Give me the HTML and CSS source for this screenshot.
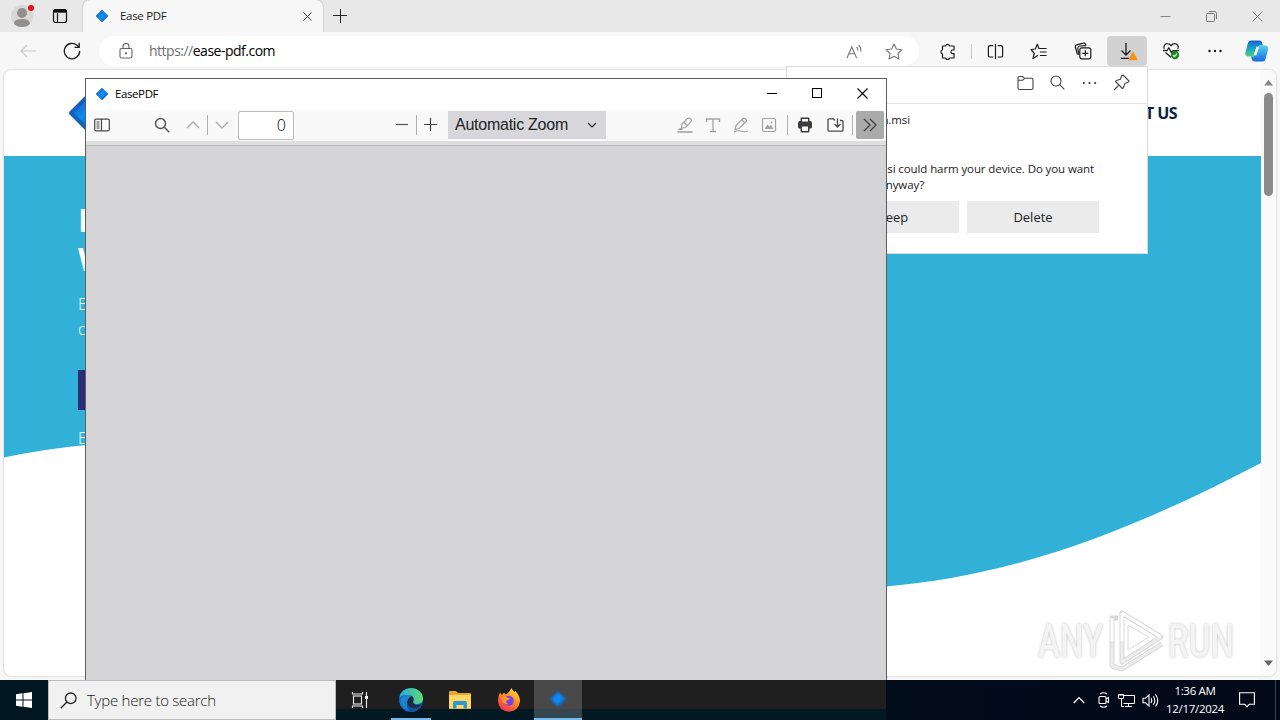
FILE: index.html
```html
<!DOCTYPE html>
<html lang="en">

<head>
    <meta charset="utf-8">
    <title>Ease PDF</title>
    <link rel="stylesheet" href="styles.css">
</head>

<body>
    <!-- shared gem logo -->
    <svg class="defs">
        <defs>
            <linearGradient id="gem" x1="0" y1="0" x2="1" y2="1">
                <stop offset="0" stop-color="#1a55b0"/>
                <stop offset=".5" stop-color="#0a8cf5"/>
                <stop offset="1" stop-color="#0a4faa"/>
            </linearGradient>
            <linearGradient id="cop1" x1="0" y1="0" x2="0" y2="1">
                <stop offset="0" stop-color="#1b5fd0"/>
                <stop offset=".5" stop-color="#16a6c9"/>
                <stop offset="1" stop-color="#55cf72"/>
            </linearGradient>
            <linearGradient id="cop2" x1="0" y1="0" x2="0" y2="1">
                <stop offset="0" stop-color="#54d0ef"/>
                <stop offset="1" stop-color="#1768e0"/>
            </linearGradient>
            <linearGradient id="edge1" x1="0" y1="0" x2="1" y2="0">
                <stop offset="0" stop-color="#2aa5e0"/>
                <stop offset="1" stop-color="#5ddc71"/>
            </linearGradient>
            <linearGradient id="fox" x1=".8" y1="0" x2=".2" y2="1">
                <stop offset="0" stop-color="#ffe43a"/>
                <stop offset=".45" stop-color="#ff8a1e"/>
                <stop offset="1" stop-color="#f02a5c"/>
            </linearGradient>
            <symbol id="logo" viewBox="0 0 14 14">
                <path d="M7 1 13 7 7 13 1 7z" fill="url(#gem)" stroke="#1565c0" stroke-width=".6" stroke-linejoin="round"/>
                <path d="M7 3.4 10.6 7 7 10.6 3.4 7z" fill="#0b8cf5"/>
            </symbol>
        </defs>
    </svg>

    <div class="desktop">
        <!-- browser -->
        <div class="browser">
            <div class="tabstrip">
                <div class="profile">
                    <svg width="26" height="28" viewBox="0 0 26 28">
                        <circle cx="12" cy="16" r="11" fill="#d9d7d5"/>
                        <circle cx="12" cy="13" r="5" fill="#918f8d"/>
                        <path d="M4 24q0-5 8-5t8 5q-3 3-8 3t-8-3z" fill="#918f8d"/>
                        <circle cx="21" cy="8" r="3" fill="#e0101c"/>
                    </svg>
                </div>
                <div class="workspaces">
                    <svg width="16" height="16" viewBox="0 0 16 16" fill="none" stroke="#111" stroke-width="1.2">
                        <rect x="1.5" y="1.5" width="13" height="13" rx="2"/>
                        <path d="M1.5 3.5h13M5.5 5v9.5" />
                        <path d="M2 3.2h12" stroke-width="3"/>
                    </svg>
                </div>
                <div class="tab">
                    <svg width="14" height="14"><use href="#logo"/></svg>
                    <span class="tab-title">Ease PDF</span>
                    <svg class="tab-close" width="9" height="9" viewBox="0 0 9 9" stroke="#333"><path d="M.5.5l8 8M8.500.5l-8 8"/></svg>
                </div>
                <svg class="newtab" width="14" height="14" viewBox="0 0 14 14" stroke="#222"><path d="M7.5 0v14M0 6.5h14"/></svg>
                <div class="win-controls">
                    <svg width="11" height="11" viewBox="0 0 11 11" stroke="#888"><path d="M.5 5.5h10"/></svg>
                    <svg width="11" height="11" viewBox="0 0 11 11" fill="none" stroke="#777"><rect x=".5" y="2.5" width="8" height="8" rx="1"/><path d="M3 .5h5.5a2 2 0 0 1 2 2V8"/></svg>
                    <svg width="11" height="11" viewBox="0 0 11 11" stroke="#777"><path d="M.5.5l10 10M10.5.5l-10 10"/></svg>
                </div>
            </div>

            <div class="toolbar">
                <svg class="back" width="16" height="14" viewBox="0 0 16 14" fill="none" stroke="#c8c8c8" stroke-width="1.1"><path d="M7 1 1 7l6 6M1 7h15"/></svg>
                <svg class="reload" width="18" height="18" viewBox="0 0 18 18" fill="none" stroke="#1b1b1b" stroke-width="1.3"><path d="M16.7 9A7.7 7.7 0 1 1 14 3.2L16 5M16.2.8V5.3h-4.6"/></svg>
                <div class="address">
                    <svg width="14" height="16" viewBox="0 0 14 16" fill="none" stroke="#666" stroke-width="1.1"><rect x="1" y="5.5" width="12" height="9.5" rx="1.5"/><path d="M4 5.5V3.5a3 3 0 0 1 6 0v2"/><circle cx="7" cy="10.3" r=".6" fill="#555"/></svg>
                    <span class="url"><span class="scheme">https://</span>ease-pdf.com</span>
                    <svg class="read" width="17" height="15" viewBox="0 0 17 15" fill="none" stroke="#777" stroke-width="1.1"><path d="M1 14 5.800 3 10.600 14M2.800 9.800h6M10.500 3q1.600 1.300 1.200 3.600M12.500 1.200q3 2.300 2.200 6.400"/></svg>
                    <svg width="18" height="17" viewBox="0 0 18 17" fill="none" stroke="#777" stroke-width="1.1" stroke-linejoin="round"><path d="M9 1l2.400 5 5.600.7-4.100 3.800 1 5.500L9 13.300 4.100 16l1-5.500L1 6.700 6.600 6z"/></svg>
                </div>
                <div class="tool"><svg width="17" height="17" viewBox="0 0 17 17" fill="none" stroke="#1b1b1b" stroke-width="1.2" stroke-linejoin="round"><path d="M3.500 3h3a2.200 2.200 0 0 1 4.200 0H15v4h-1.200a1.800 1.800 0 0 0 0 3.600H15V15h-4.300a2.200 2.200 0 0 1-4.200 0h-3v-4a2.200 2.200 0 0 1 0-4.200z"/></svg></div>
                <div class="tool-sep"></div>
                <div class="tool"><svg width="17" height="17" viewBox="0 0 17 17" fill="none" stroke="#1b1b1b" stroke-width="1.2"><path d="M6.3 2.6H3A1.6 1.6 0 0 0 1.4 4.2v8.2A1.6 1.6 0 0 0 3 14h3.3M10.7 2.6H14a1.6 1.6 0 0 1 1.6 1.6v8.2A1.6 1.6 0 0 1 14 14h-3.3M8.500 1v15"/></svg></div>
                <div class="tool"><svg width="18" height="17" viewBox="0 0 18 17" fill="none" stroke="#1b1b1b" stroke-width="1.2" stroke-linejoin="round"><path d="M10.600 5.500 9 5.500 7.300 1.200 5.300 6 1 6.500l3.300 3.800L3 15.500l5-3.200M10.600 5.500h6M10 9h6.600M10 12.500h6.600"/></svg></div>
                <div class="tool"><svg width="18" height="18" viewBox="0 0 18 18" fill="none" stroke="#1b1b1b" stroke-width="1.2"><rect x="5.800" y="5.800" width="11" height="11" rx="2"/><path d="M11.300 8.300v6M8.300 11.300h6M3.500 12.500 1.300 5A2 2 0 0 1 2.700 2.800l6.500-1.700a2 2 0 0 1 2.500 1.400l.3 1.200"/><path d="M5 13 3.800 7A2.500 2.500 0 0 1 6 4L12 3.700"/></svg></div>
                <div class="tool download"><svg width="22" height="20" viewBox="0 0 22 20" fill="none" stroke="#1b1b1b" stroke-width="1.300"><path d="M10 2v12M5.500 9.500 10 14l4.500-4.500M5 17.400h9"/><path d="M17 11.500 21 18.500h-8z" fill="#f7941d" stroke="#f7941d" stroke-linejoin="round"/></svg></div>
                <div class="tool"><svg width="19" height="18" viewBox="0 0 19 18" fill="none" stroke="#1b1b1b" stroke-width="1.2" stroke-linejoin="round"><path d="M2.300 7.300C.8 4.300 3 1.600 5.500 1.700 7.500 1.700 8.500 3 9 3.800c.6-.9 1.700-2.100 3.600-2.100 2.700 0 4.700 2.700 3.200 5.600M3.500 10.500 9 15.300M1 8.700h4l1.800-3 2.700 5 1.600-2H17"/><circle cx="13" cy="13" r="4.200" fill="#1a8a1a" stroke="none"/><path d="m11 13 1.500 1.600 2.700-3" stroke="#fff"/></svg></div>
                <div class="tool"><svg width="14" height="4" viewBox="0 0 14 4" fill="#1b1b1b"><circle cx="1.500" cy="2" r="1.200"/><circle cx="7" cy="2" r="1.200"/><circle cx="12.500" cy="2" r="1.200"/></svg></div>
                <div class="tool copilot"><svg width="24" height="22" viewBox="0 0 24 22"><path d="M6 .5h8.500q2 0 2.600 2l.8 3h-3q-2 0-2.700 2l-2 7q-.6 2-2.400 2H3.500Q-.5 16.500.5 12L2.800 3.500Q3.600.5 6 .5z" fill="url(#cop1)"/><path d="M18 21.500H9.500q-2 0-2.600-2l-.8-3h2q2 0 2.700-2l2-7q.6-2 2.400-2h4.800q4 0 3 4.500l-2.300 8.500q-.6 3-2.700 3z" fill="url(#cop2)"/><path d="M12.800 7 10 15" stroke="#f7f7f7" stroke-width="2.600"/></svg></div>
            </div>

            <div class="page">
                <div class="site">
                    <div class="site-header">
                        <svg class="site-logo" width="36" height="36" viewBox="0 0 36 36"><path d="M18 3 33 18 18 33 3 18z" fill="url(#gem)" stroke="#1560bd" stroke-width="4" stroke-linejoin="round"/></svg>
                        <span class="nav-link">CONTACT US</span>
                    </div>
                    <div class="hero">
                        <svg class="wave" width="1257" height="440" viewBox="0 0 1257 440"><path d="M0 0H1257V307C1127 375 1010 420 882 430.500C600 440 380 250 82 289Q40 293 0 301.500z" fill="#31b1d8"/></svg>
                        <div class="hero-text">
                            <h1>E<br>W</h1>
                            <p>E<br>c</p>
                            <div class="cta"></div>
                            <p class="note">E</p>
                        </div>
                    </div>
                </div>
                <div class="scrollbar">
                    <svg width="9" height="6" viewBox="0 0 9 6"><path d="M4.500 0 9 5.500H0z" fill="#858585"/></svg>
                    <div class="thumb"></div>
                    <svg class="down" width="9" height="6" viewBox="0 0 9 6"><path d="M0 .5h9L4.500 6z" fill="#666"/></svg>
                </div>
            </div>
        </div>

        <!-- downloads flyout -->
        <div class="flyout">
            <div class="flyout-head">
                <span class="flyout-title">Downloads</span>
                <svg width="17" height="16" viewBox="0 0 17 16" fill="none" stroke="#444" stroke-width="1.1"><path d="M1 4.500V3a1.500 1.500 0 0 1 1.500-1.500H5.500L7.500 3.300H14.500A1.500 1.500 0 0 1 16 4.800V13a1.500 1.500 0 0 1-1.500 1.500h-12A1.500 1.500 0 0 1 1 13zM1 5.300H5.700L7.500 3.300"/></svg>
                <svg width="15" height="15" viewBox="0 0 15 15" fill="none" stroke="#444" stroke-width="1.1"><circle cx="6" cy="6" r="5"/><path d="m9.700 9.700 4.600 4.600"/></svg>
                <svg width="15" height="4" viewBox="0 0 15 4" fill="#333"><circle cx="1.800" cy="2" r="1.100"/><circle cx="7.500" cy="2" r="1.100"/><circle cx="13.200" cy="2" r="1.100"/></svg>
                <svg width="17" height="17" viewBox="0 0 17 17" fill="none" stroke="#444" stroke-width="1.100" stroke-linejoin="round"><path d="m10 1 6 6-1 1.300-3.200 1.200-1.300 4.200-1 .8L2.500 7.500l.9-1 4-1.300L8.700 2zM6 11l-5 5"/></svg>
            </div>
            <div class="flyout-body">
                <div class="file">EasePDF_Main.msi</div>
                <div class="warn">EasePDF_Main.msi could harm your device. Do you want</div>
                <div class="warn second">to keep it anyway?</div>
                <div class="actions">
                    <div class="btn">Keep</div>
                    <div class="btn">Delete</div>
                </div>
            </div>
        </div>

        <!-- watermark -->
        <div class="watermark">
            <span class="wm-text">ANY</span>
            <svg width="58" height="66" viewBox="0 0 58 66" fill="none" stroke-linejoin="round">
                <g stroke="#d8d8d8" stroke-width="5"><path d="M16 5 55 29 16 54z"/><path d="M12 10H6v48l10 3L56 36"/></g>
                <g stroke="#ececec" stroke-width="3"><path d="M55 29 16 54V33M6 33v25l10 3 40-25"/></g>
                <g stroke="#fff" stroke-width="3"><path d="M16 5 55 29"/><path d="M16 5v28M6 10v23"/></g>
                <path d="M22 17 43 29 22 42z" stroke="#d8d8d8" fill="#fff" stroke-width="1"/>
            </svg>
            <span class="wm-text">RUN</span>
        </div>

        <!-- EasePDF window -->
        <div class="app">
            <div class="app-title">
                <svg width="14" height="14"><use href="#logo"/></svg>
                <span>EasePDF</span>
                <div class="app-controls">
                    <svg width="11" height="11" viewBox="0 0 11 11" stroke="#000"><path d="M0 5.500h10"/></svg>
                    <svg width="11" height="11" viewBox="0 0 11 11" fill="none" stroke="#000"><rect x=".5" y=".5" width="9" height="9"/></svg>
                    <svg width="11" height="11" viewBox="0 0 11 11" stroke="#000" stroke-width="1.100"><path d="M.5.5l10 10M10.500.5l-10 10"/></svg>
                </div>
            </div>
            <div class="pdfbar">
                <div class="pbtn"><svg width="16" height="14" viewBox="0 0 16 14" fill="none" stroke="#4a4a4d" stroke-width="1.200"><rect x=".7" y="1.200" width="14.600" height="11.600" rx="1.200"/><path d="M7.500 1v12M2.500 4h3M2.500 6h3M2.500 8h3M2.500 10h3"/></svg></div>
                <div class="pbtn find"><svg width="16" height="16" viewBox="0 0 16 16" fill="none" stroke="#555" stroke-width="1.500"><circle cx="6.500" cy="6.500" r="5"/><path d="m10.300 10.300 5 5"/></svg></div>
                <div class="pbtn prev"><svg width="14" height="8" viewBox="0 0 14 8" fill="none" stroke="#aaa" stroke-width="1.300"><path d="m1 7 6-6 6 6"/></svg></div>
                <div class="psep"></div>
                <div class="pbtn"><svg width="14" height="8" viewBox="0 0 14 8" fill="none" stroke="#aaa" stroke-width="1.300"><path d="m1 1 6 6 6-6"/></svg></div>
                <div class="pagenum">0</div>
                <div class="pbtn minus"><svg width="12" height="13" viewBox="0 0 12 13" stroke="#555" stroke-width="1.200"><path d="M0 6.500h12"/></svg></div>
                <div class="psep"></div>
                <div class="pbtn plus"><svg width="13" height="13" viewBox="0 0 13 13" stroke="#444" stroke-width="1.200"><path d="M0 6.500h13M6.500 0v13"/></svg></div>
                <div class="zoom"><span>Automatic Zoom</span><svg width="10" height="6" viewBox="0 0 10 6" fill="none" stroke="#222" stroke-width="1.200"><path d="m1 1 4 4 4-4"/></svg></div>
                <div class="pbtn hl"><svg width="16" height="16" viewBox="0 0 16 16" fill="none" stroke="#a2a2a4" stroke-width="1.200"><path d="M.5 15h15" stroke-width="1.600"/><path d="m5 7 5.500-5.500q1.500-1 3 .3t.4 3L8.500 10.500 4.500 11zM7 5.500l3 3M4.500 11 2 12.500h3z"/></svg></div>
                <div class="pbtn"><svg width="16" height="16" viewBox="0 0 16 16" fill="none" stroke="#a2a2a4" stroke-width="1.300"><path d="M1.500 5V2h13v3M8 2v12.500M5 14.500h6"/></svg></div>
                <div class="pbtn"><svg width="16" height="16" viewBox="0 0 16 16" fill="none" stroke="#a2a2a4" stroke-width="1.200"><path d="m3 8.500 7-7q1-.8 2.500.3t.7 2.700l-7 7L2 12.500zM9 3l3 3M1 15q5-2 8-.8t6-.2"/></svg></div>
                <div class="pbtn"><svg width="16" height="16" viewBox="0 0 16 16" fill="none" stroke="#a2a2a4" stroke-width="1.200"><rect x="1.500" y="1.500" width="13" height="13" rx="1.500"/><path d="m3.500 12 3-4.500 2 2 1.500-1.500 2.500 4z" fill="#a2a2a4" stroke="none"/><circle cx="10.500" cy="5.500" r="1" fill="#a2a2a4" stroke="none"/></svg></div>
                <div class="psep s1"></div>
                <div class="pbtn print"><svg width="16" height="16" viewBox="0 0 16 16" fill="#3c3c40"><path d="M3.500 1.500q0-1 1-1h7q1 0 1 1V4h.5q2 0 2 2v4q0 1.500-1.500 1.500h-1V14q0 1.500-1.500 1.500H5q-1.500 0-1.500-1.500v-2.500h-1Q1 11.500 1 10V6q0-2 2-2h.5z"/><path d="M5 2h6v2.500H5zM5 9.500h6V14H5z" fill="#f9f9fa"/></svg></div>
                <div class="pbtn save"><svg width="17" height="16" viewBox="0 0 17 16" fill="none" stroke="#4a4a4d" stroke-width="1.300"><path d="M8 3.500 6.500 1.800H2.200Q1 1.800 1 3v10q0 1.200 1.200 1.200h12.600Q16 14.200 16 13V4.700q0-1.200-1.200-1.200H13M10.500 1.500V10M7.500 7l3 3 3-3"/></svg></div>
                <div class="psep s2"></div>
                <div class="pbtn more"><svg width="14" height="14" viewBox="0 0 14 14" fill="none" stroke="#444" stroke-width="1.400"><path d="m1 1 6 6-6 6M7 1l6 6-6 6"/></svg></div>
            </div>
            <div class="pdfstrip"></div>
            <div class="viewer"></div>
        </div>

        <!-- taskbar -->
        <div class="taskbar">
            <div class="start"><svg width="16" height="16" viewBox="0 0 16 16" fill="#fff"><path d="M0 2.300 6.500 1.300V7.500H0zM7.500 1.200 16 0V7.500H7.500zM0 8.500h6.500v6.200L0 13.700zM7.500 8.500H16V16l-8.500-1.200z"/></svg></div>
            <div class="search">
                <svg width="17" height="17" viewBox="0 0 17 17" fill="none" stroke="#222" stroke-width="1.300"><circle cx="10.700" cy="6.300" r="5.300"/><path d="M7 10 .7 16.300"/></svg>
                <span>Type here to search</span>
            </div>
            <div class="apps">
                <div class="task view"><svg width="17" height="16" viewBox="0 0 17 16" fill="none" stroke="#eee" stroke-width="1.100"><rect x="2.500" y="4" width="8" height="8"/><path d="M1.500 0v2H11.500V0M1.500 16v-2H11.500v2M15.500 0v16"/><path d="M14 4h3v3h-3z" fill="#fff" stroke="none"/></svg></div>
                <div class="task running">
                    <svg width="24" height="24" viewBox="0 0 24 24"><circle cx="12" cy="12" r="12" fill="#1267b8"/><path d="M.2 10Q2 0 12.300 0 22 .5 24 9.500q.5 5.800-5.500 6.500-5 .2-4-3 1-4-3.500-5.500Q4 5.500.2 10z" fill="url(#edge1)"/><path d="M8 15q.5-5.500 5-7.300 2 1.800 1.500 4-2 4 3 5.300 3 .2 5.500-1.500-2 4-6 5.500Q9 22 8 15z" fill="#1b2b3c"/><path d="M8 14q0 6 6 7.500-9 2-12.500-6Q0 8.500 7 7.200q4-.3 6 .5Q9 9 8 14z" fill="#1b83d0"/><path d="M8 15q2 5 8 5 4-.5 6.500-3.500Q18.500 23.800 12 24 7 21 8 15z" fill="#154f99"/></svg>
                </div>
                <div class="task"><svg width="22" height="19" viewBox="0 0 22 19"><path d="M0 1q0-1 1-1h6l2 2h12q1 0 1 1v15H0z" fill="#e9a926"/><path d="M0 4h22v13.500H0z" fill="#ffd766"/><path d="M4 17.500V12q0-2 2-2h10q2 0 2 2v5.500h-3.500V14h-7v3.500z" fill="#2c96d2"/></svg></div>
                <div class="task"><svg width="24" height="24" viewBox="0 0 24 24"><path d="M3 4.500 5 7l2-2.500Q8 6 9 6.500 12 5 14.500 0q1 2.500 3 4l1-1Q23.500 9 23 13.500 21.500 23 12 23.700 1.500 23 1 12.500 1 8 3 4.500z" fill="url(#fox)"/><circle cx="11.800" cy="12.700" r="5" fill="#7542e5"/><path d="M4 10q3-3 6-.5l3 .5q-1 2-3.500 2.500-1.500 2 2 3.500-5 1.500-7.500-6z" fill="#ff9525"/></svg></div>
                <div class="task active"><svg class="blurry" width="18" height="18"><use href="#logo"/></svg></div>
            </div>
            <div class="tray">
                <svg class="chev" width="12" height="8" viewBox="0 0 12 8" fill="none" stroke="#fff" stroke-width="1.200"><path d="m.8 7 5.200-5.500L11.200 7"/></svg>
                <svg class="cam" width="14" height="16" viewBox="0 0 14 16" fill="none" stroke="#fff" stroke-width="1.100"><rect x="2" y="4.500" width="7" height="7" rx="1"/><path d="M9 7l2.500-1.500v5L9 9M3 2Q6.500-.5 10 2M3 14q3.500 2.500 7 0"/></svg>
                <svg class="net" width="17" height="15" viewBox="0 0 17 15" fill="none" stroke="#fff"><path d="M5.500 2.500h11v8h-11M10.500 10.500v3M7 13.500h7M3.500 5.500v8H6M.5 1.500h5v4h-5zM2 1v2M4 1v2"/></svg>
                <svg class="vol" width="17" height="15" viewBox="0 0 17 15" fill="none" stroke="#fff" stroke-width="1.100"><path d="M1 5.300h2.300L7 2v11L3.300 9.700H1zM9 5q1.500 2.500 0 5M11.300 3.300q3 4.200 0 8.400M13.500 1.500q4.500 6 0 12"/></svg>
                <div class="clock"><div>1:36 AM</div><div>12/17/2024</div></div>
                <svg class="notif" width="16" height="16" viewBox="0 0 16 16" fill="none" stroke="#fff" stroke-width="1.100"><path d="M.6.700h14.800v11.600h-5.200L8 14.800l-2.200-2.500H.6z"/></svg>
                <div class="peek"></div>
            </div>
        </div>
    </div>
</body>

</html>
```
FILE: styles.css
```css
html, body {
  margin: 0;
  padding: 0;
}

body {
  font-family: "Open Sans", "Noto Sans", sans-serif;
  font-size: 12px;
  color: #222;
}

svg {
  display: block;
  flex: none;
}

.defs {
  position: absolute;
  width: 0;
  height: 0;
}

.desktop {
  position: relative;
  width: 1280px;
  height: 720px;
  overflow: hidden;
  display: flex;
  flex-direction: column;
}

/* Browser window */
.browser {
  isolation: isolate;
  height: 680px;
  background: #f7f7f7;
}

.tabstrip {
  display: flex;
  height: 32px;
  background: #e8e8e8;
}

.profile {
  width: 42px;
  padding-left: 10px;
  box-sizing: border-box;
}

.workspaces {
  width: 41px;
  padding: 8px 0 0 10px;
  box-sizing: border-box;
}

.tab {
  display: flex;
  align-items: center;
  width: 240px;
  height: 32px;
  padding: 0 11px 0 12px;
  box-sizing: border-box;
  background: #f7f7f7;
  border-radius: 7px 7px 0 0;
  box-shadow: 0 0 2px rgba(0, 0, 0, 0.3);
  clip-path: inset(0 -3px 0 -3px);
}

.tab-title {
  flex: 1;
  padding: 0 0 2px 11px;
  font-size: 11.5px;
  letter-spacing: -0.3px;
}

.newtab {
  margin: 9px 0 0 10px;
}

.win-controls {
  display: flex;
  align-items: center;
  gap: 35px;
  margin-left: auto;
  padding-right: 17px;
}

.toolbar {
  display: flex;
  align-items: center;
  height: 38px;
}

.back {
  margin-left: 20px;
}

.reload {
  margin-left: 27px;
}

.address {
  display: flex;
  align-items: center;
  width: 820px;
  height: 30px;
  margin: 0 6px 0 18px;
  padding: 0 16px 0 20px;
  box-sizing: border-box;
  background: #fff;
  border-radius: 15px;
}

.url {
  flex: 1;
  padding: 0 0 2px 16px;
  font-size: 14px;
  letter-spacing: -0.5px;
  color: #000;
}

.scheme {
  color: #707070;
}

.read {
  margin-right: 22px;
}

.tool {
  display: flex;
  align-items: center;
  justify-content: center;
  width: 44px;
  height: 30px;
}

.tool-sep {
  width: 1px;
  height: 15px;
  margin: 0 1px 0 2px;
  background: #ccc;
}

.tool.download {
  width: 40px;
  margin: 0 2px;
  height: 30px;
  background: #d2d2d2;
  border-radius: 4px;
}

.tool.copilot {
  width: 40px;
}

/* Web page */
.page {
  display: flex;
  width: 1272px;
  height: 606px;
  margin-left: 4px;
  background: #fff;
  border-radius: 7px;
  box-shadow: 0 0 2px rgba(0, 0, 0, 0.3);
  overflow: hidden;
}

.site {
  width: 1257px;
}

.site-header {
  display: flex;
  align-items: center;
  height: 86px;
  padding: 0 84px 0 64px;
}

.nav-link {
  margin-left: auto;
  font-size: 16px;
  font-weight: bold;
  letter-spacing: -0.6px;
  color: #0b2341;
}

.hero {
  display: grid;
}

.wave, .hero-text {
  grid-area: 1 / 1;
}

.hero-text {
  z-index: 1;
  padding: 44px 0 0 74px;
  color: #fff;
}

.hero-text h1 {
  margin: 0;
  font-size: 32px;
  line-height: 39px;
}

.hero-text p {
  margin: 14px 0 0;
  font-size: 16px;
  font-weight: 300;
  line-height: 25px;
}

.cta {
  width: 130px;
  height: 40px;
  margin-top: 28px;
  background: #2b2c78;
}

.hero-text .note {
  margin-top: 16px;
}

.scrollbar {
  display: flex;
  flex-direction: column;
  align-items: center;
  width: 15px;
  padding: 10px 0;
  box-sizing: border-box;
  background: #fafafa;
}

.thumb {
  width: 9px;
  height: 103px;
  margin-top: 7px;
  background: #8b8b8b;
  border-radius: 5px;
}

.scrollbar .down {
  margin-top: auto;
}

/* Downloads flyout */
.flyout {
  position: absolute;
  left: 786px;
  top: 66px;
  width: 362px;
  height: 188px;
  box-sizing: border-box;
  background: #fff;
  border: 1px solid #dadada;
}

.flyout-head {
  display: flex;
  align-items: center;
  height: 36px;
  padding: 0 17px 0 16px;
  border-bottom: 1px solid #e5e5e5;
}

.flyout-head svg {
  margin: 0 0 5px 16.5px;
}

.flyout-title {
  flex: 1;
  padding-bottom: 3px;
  font-size: 14px;
  font-weight: bold;
}

.flyout-body {
  display: flex;
  flex-direction: column;
}

.file, .warn {
  width: 307px;
  text-align: right;
  font-size: 11.5px;
  line-height: 16px;
  letter-spacing: -0.1px;
  white-space: nowrap;
}

.file {
  width: 123px;
  margin: 8px 0 33px;
}

.warn.second {
  width: 137px;
}

.actions {
  display: flex;
  gap: 8px;
  margin: 8px 0 0 40px;
}

.btn {
  width: 132px;
  height: 32px;
  background: #ebebeb;
  font-size: 13px;
  line-height: 32px;
  text-align: center;
}

/* Watermark */
.watermark {
  position: absolute;
  left: 1038px;
  top: 608px;
  display: flex;
  align-items: center;
  gap: 4px;
}

.wm-text {
  width: 64px;
  font-family: Roboto, sans-serif;
  font-size: 46px;
  font-weight: 500;
  line-height: 66px;
  transform: scaleX(0.72);
  transform-origin: 0 50%;
  color: #f4f4f4;
  text-shadow: 0 0 3px #b8b8b8;
}

/* PDF window */
.app {
  position: absolute;
  left: 85px;
  top: 78px;
  width: 802px;
  height: 640px;
  box-sizing: border-box;
  display: flex;
  flex-direction: column;
  background: #d4d4d7;
  border: 1px solid #5d5d5d;
}

.app-title {
  display: flex;
  align-items: center;
  height: 31px;
  padding: 0 18px 2px 9px;
  box-sizing: border-box;
  background: #fff;
  color: #000;
  font-size: 11.5px;
  letter-spacing: -0.4px;
}

.app-title span {
  padding-left: 6px;
}

.app-controls {
  display: flex;
  gap: 34px;
  margin-left: auto;
}

.pdfbar {
  display: flex;
  align-items: center;
  height: 31px;
  padding: 0 0 2px 2px;
  box-sizing: border-box;
  background: #f9f9fa;
}

.pbtn {
  display: flex;
  align-items: center;
  justify-content: center;
  width: 28px;
  height: 28px;
}

.find {
  margin-left: 32px;
}

.prev {
  margin-left: 3px;
}

.psep {
  width: 1px;
  height: 20px;
  background: #b0b0b2;
}

.pagenum {
  width: 56px;
  height: 29px;
  margin: 2px 0 0 2px;
  padding-right: 7px;
  box-sizing: border-box;
  background: #fff;
  border: 1px solid #bbbbbc;
  border-radius: 2px;
  font-size: 16px;
  font-weight: 300;
  line-height: 27px;
  text-align: right;
  color: #000;
}

.minus {
  margin-left: 94px;
}

.plus {
  padding-right: 2px;
  box-sizing: border-box;
}

.zoom {
  display: flex;
  align-items: center;
  justify-content: space-between;
  width: 158px;
  height: 28px;
  margin-left: 3px;
  padding: 0 9px 0 7px;
  box-sizing: border-box;
  background: #d7d7db;
  font-family: "Liberation Sans", Arial, sans-serif;
  font-size: 16px;
  letter-spacing: -0.25px;
  color: #222;
}

.hl {
  margin-left: 65px;
}

.s1 {
  margin-left: 4px;
}

.print {
  margin-left: 3px;
}

.save {
  margin-left: 2px;
}

.s2 {
  margin: 0 3px;
}

.more {
  background: #aaa;
  border-radius: 2px;
}

.pdfstrip {
  height: 4px;
  background: #dededf;
  border-bottom: 1px solid #b9b9bb;
}

.viewer {
  flex: 1;
}

/* Taskbar */
.taskbar {
  position: relative;
  display: flex;
  height: 40px;
  background: linear-gradient(90deg, #001722, #020a1a 85%);
}

.start {
  display: flex;
  align-items: center;
  justify-content: center;
  width: 48px;
}

.search {
  display: flex;
  align-items: center;
  width: 288px;
  padding-left: 11px;
  box-sizing: border-box;
  background: #f1f1f1;
  border: 1px solid #bcbcbc;
}

.search span {
  padding-left: 10px;
  font-size: 15px;
  font-weight: 300;
  letter-spacing: -0.25px;
}

.apps {
  display: flex;
  gap: 1px;
  width: 550px;
  background: linear-gradient(#1f1f1f 29px, #021823 29px);
}

.task {
  display: flex;
  align-items: center;
  justify-content: center;
  width: 48px;
  box-sizing: border-box;
}

.task.view {
  margin-right: 2px;
  padding-right: 2px;
}

.running {
  background: linear-gradient(#76b9ed, #76b9ed) center bottom / 40px 2px no-repeat;
}

.active {
  background: linear-gradient(#494949 29px, #344650 29px);
  border-bottom: 2px solid #76b9ed;
}

.blurry {
  filter: blur(1px);
}

.tray {
  display: flex;
  align-items: center;
  margin-left: auto;
  color: #fff;
}

.cam {
  margin-left: 12px;
}

.net {
  margin-left: 7px;
}

.vol {
  margin-left: 7px;
}

.clock {
  width: 72px;
  font-size: 11.5px;
  line-height: 18px;
  letter-spacing: -0.3px;
  text-align: center;
}

.notif {
  margin-left: 8px;
}

.peek {
  width: 4px;
  height: 40px;
  margin-left: 20px;
  border-left: 1px solid #3c4350;
}
```
